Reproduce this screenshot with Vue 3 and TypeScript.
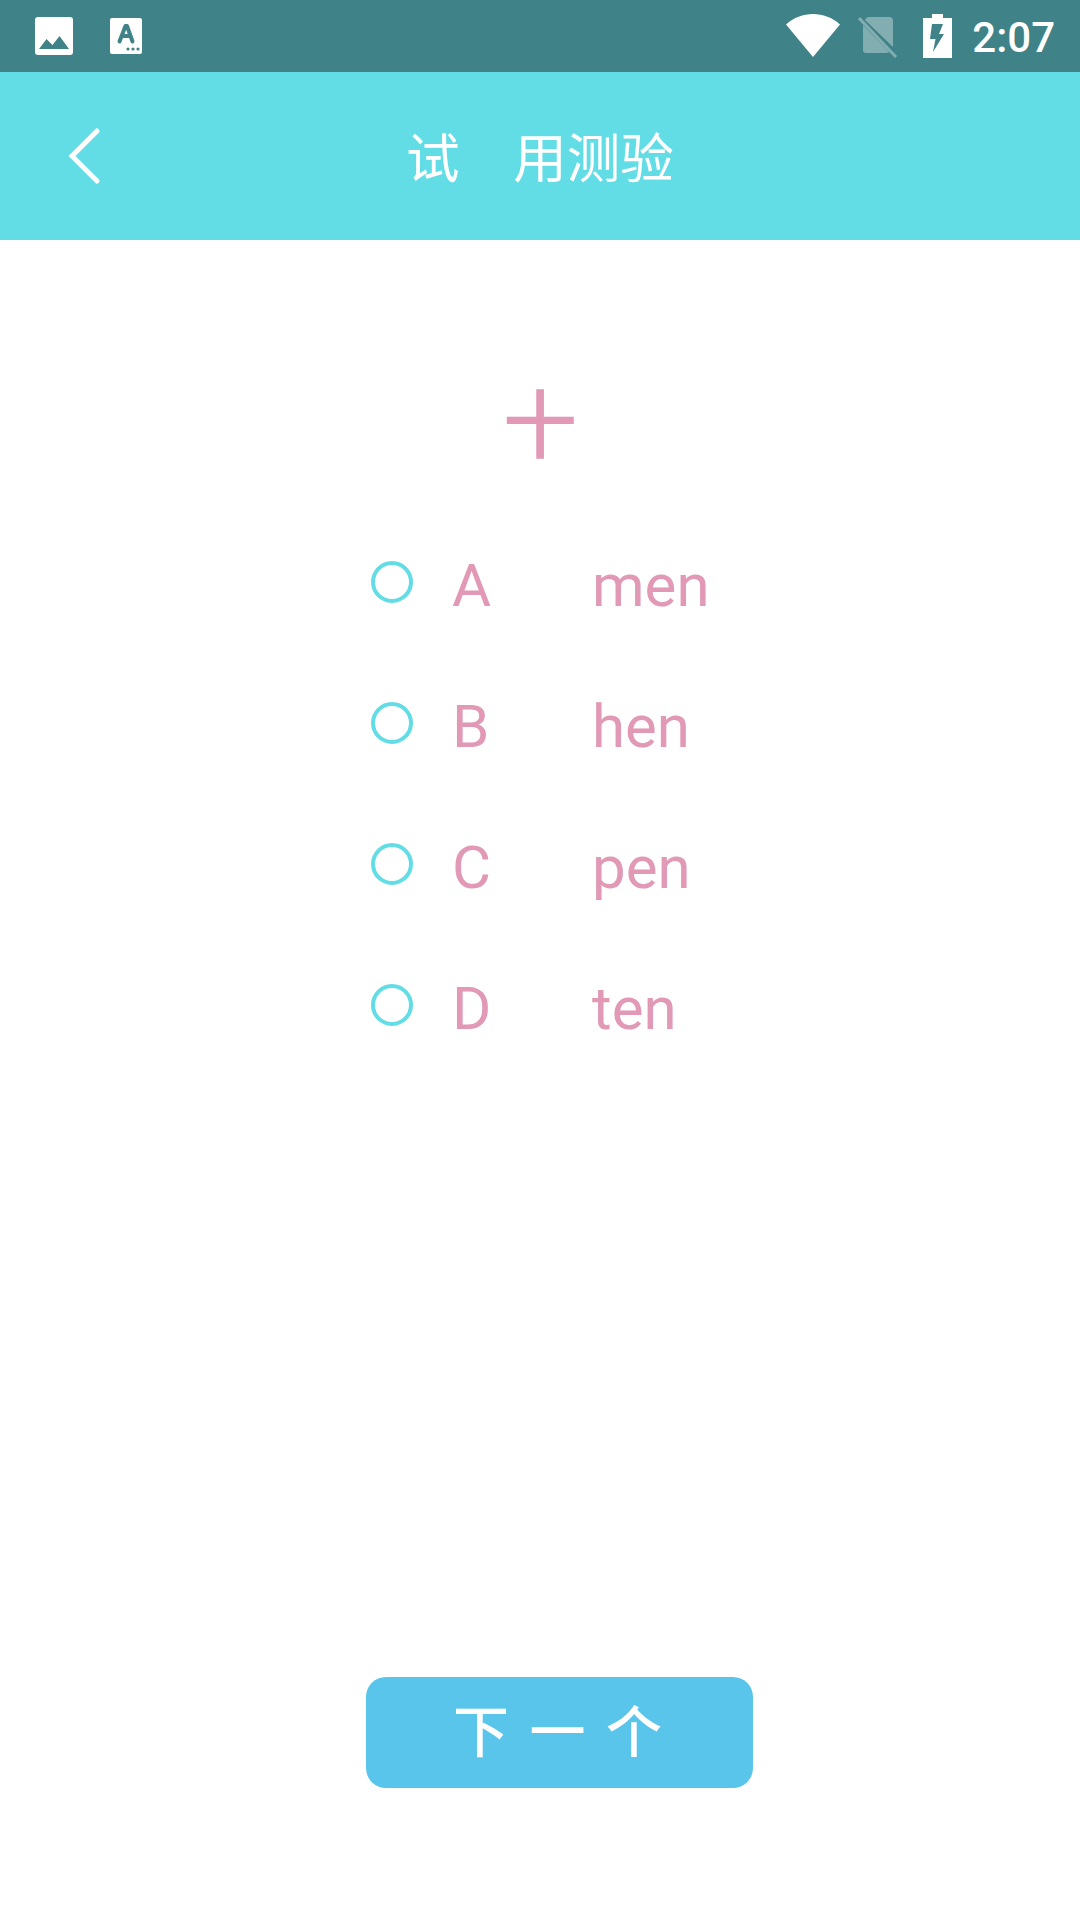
<script setup lang="ts">
interface Option { key: string; word: string }
const options: Option[] = [
  { key: 'A', word: 'men' },
  { key: 'B', word: 'hen' },
  { key: 'C', word: 'pen' },
  { key: 'D', word: 'ten' },
]
</script>

<template>
  <div class="page">
    <div class="status">
      <div class="status-left">
        <svg class="ic-image" width="38" height="38" viewBox="0 0 38 38">
          <rect width="38" height="38" rx="3" fill="#fff" />
          <path d="M4 32 L11.5 22 L17.5 28 L24.5 19 L34 32 Z" fill="#3f8288" />
        </svg>
        <svg class="ic-a" width="32" height="36" viewBox="0 0 32 36">
          <rect width="32" height="36" rx="2" fill="#fff" />
          <path d="M9.5 23.5 L15.5 8 H17 L22.5 23.5 M12 18 H20.5" fill="none" stroke="#3f8288" stroke-width="4" stroke-linecap="round" stroke-linejoin="round" />
          <circle cx="18" cy="31" r="1.6" fill="#3f8288" />
          <circle cx="23" cy="31" r="1.6" fill="#3f8288" />
          <circle cx="28" cy="31" r="1.6" fill="#3f8288" />
        </svg>
      </div>
      <div class="status-right">
        <svg class="ic-wifi" width="54" height="43" viewBox="0 0 54 43">
          <path d="M0 10.5 C15 -3.5 39 -3.5 54 10.5 L27 43 Z" fill="#fff" />
        </svg>
        <svg class="ic-sim" width="40" height="44" viewBox="0 0 40 44">
          <path d="M11 2 H31 Q35 2 35 6 V32 L7 5 Q8 2 11 2 Z M5 10 L31 37 Q30 38 28 38 H8 Q5 38 5 35 Z" fill="#fff" fill-opacity="0.35" />
          <path d="M1 3 L38 42" stroke="#fff" stroke-opacity="0.35" stroke-width="3" />
        </svg>
        <svg class="ic-batt" width="29" height="44" viewBox="0 0 29 44">
          <path d="M9 0 H20 V4 H29 V44 H0 V4 H9 Z" fill="#fff" />
          <path d="M9 10 H20 L16 20 H21 L10 38 L12.5 25 H7 Z" fill="#3f8288" />
        </svg>
        <span class="time">2:07</span>
      </div>
    </div>

    <header class="header">
      <svg class="back" width="34" height="58" viewBox="0 0 34 58">
        <path d="M29 4 L4 29 L29 54" fill="none" stroke="#fff" stroke-width="5" stroke-linecap="round" stroke-linejoin="miter" />
      </svg>
      <h1 class="title">试　用测验</h1>
    </header>

    <main class="main">
      <div class="glyph">十</div>
      <ul class="options">
        <li v-for="o in options" :key="o.key" class="option">
          <span class="radio"></span>
          <span class="letter">{{ o.key }}</span>
          <span class="word">{{ o.word }}</span>
        </li>
      </ul>
      <button class="next" type="button">下 一 个</button>
    </main>
  </div>
</template>

<style>
html, body { margin: 0; background: #fff; }
</style>

<style scoped>
.page {
  width: 1080px;
  height: 1920px;
  display: flex;
  flex-direction: column;
  background: #fff;
  font-family: Roboto, "Noto Sans CJK SC", sans-serif;
  overflow: hidden;
}
.status {
  height: 72px;
  flex: none;
  background: #3f8288;
  display: flex;
  align-items: center;
  justify-content: space-between;
  padding: 0 25px 0 35px;
  box-sizing: border-box;
}
.status-left, .status-right { display: flex; align-items: center; }
.ic-a { margin-left: 37px; }
.ic-wifi { margin-top: -1px; }
.ic-sim { margin-left: 18px; margin-top: 2px; }
.ic-batt { margin-left: 25px; }
.time {
  margin-left: 20px;
  color: #fff;
  font-size: 42px;
  font-weight: 500;
  line-height: 48px;
  margin-top: 4px;
}
.header {
  height: 168px;
  flex: none;
  background: #62dde5;
  display: flex;
  align-items: center;
}
.back { margin-left: 68px; flex: none; }
.title {
  margin: -3px 0 0 304px;
  color: #fff;
  font-family: "Noto Sans CJK SC", sans-serif;
  font-size: 53.6px;
  font-weight: 400;
  line-height: 64px;
  white-space: pre;
}
.main {
  flex: 1;
  display: flex;
  flex-direction: column;
  align-items: flex-start;
}
.glyph {
  align-self: center;
  margin-top: 135px;
  height: 90px;
  color: #e199b6;
  font-family: "Noto Sans CJK SC", sans-serif;
  font-size: 74px;
  font-weight: 500;
  line-height: 90px;
}
.options {
  list-style: none;
  margin: 50px 0 0;
  padding: 0 0 0 371px;
}
.option {
  height: 141px;
  display: flex;
  align-items: center;
  color: #e199b6;
  font-size: 60px;
}
.radio {
  width: 42px;
  height: 42px;
  box-sizing: border-box;
  border: 4px solid #62dde5;
  border-radius: 50%;
  flex: none;
  margin-top: -8px;
}
.letter { width: 140px; margin-left: 39px; flex: none; }
.word { flex: none; }
.next {
  margin: auto 0 132px 366px;
  width: 387px;
  height: 111px;
  border: 0;
  border-radius: 20px;
  background: #5ac5eb;
  color: #fff;
  font-family: "Noto Sans CJK SC", sans-serif;
  font-size: 56px;
  font-weight: 500;
  letter-spacing: 4px;
  line-height: 60px;
  padding: 0 0 10px;
}
</style>
